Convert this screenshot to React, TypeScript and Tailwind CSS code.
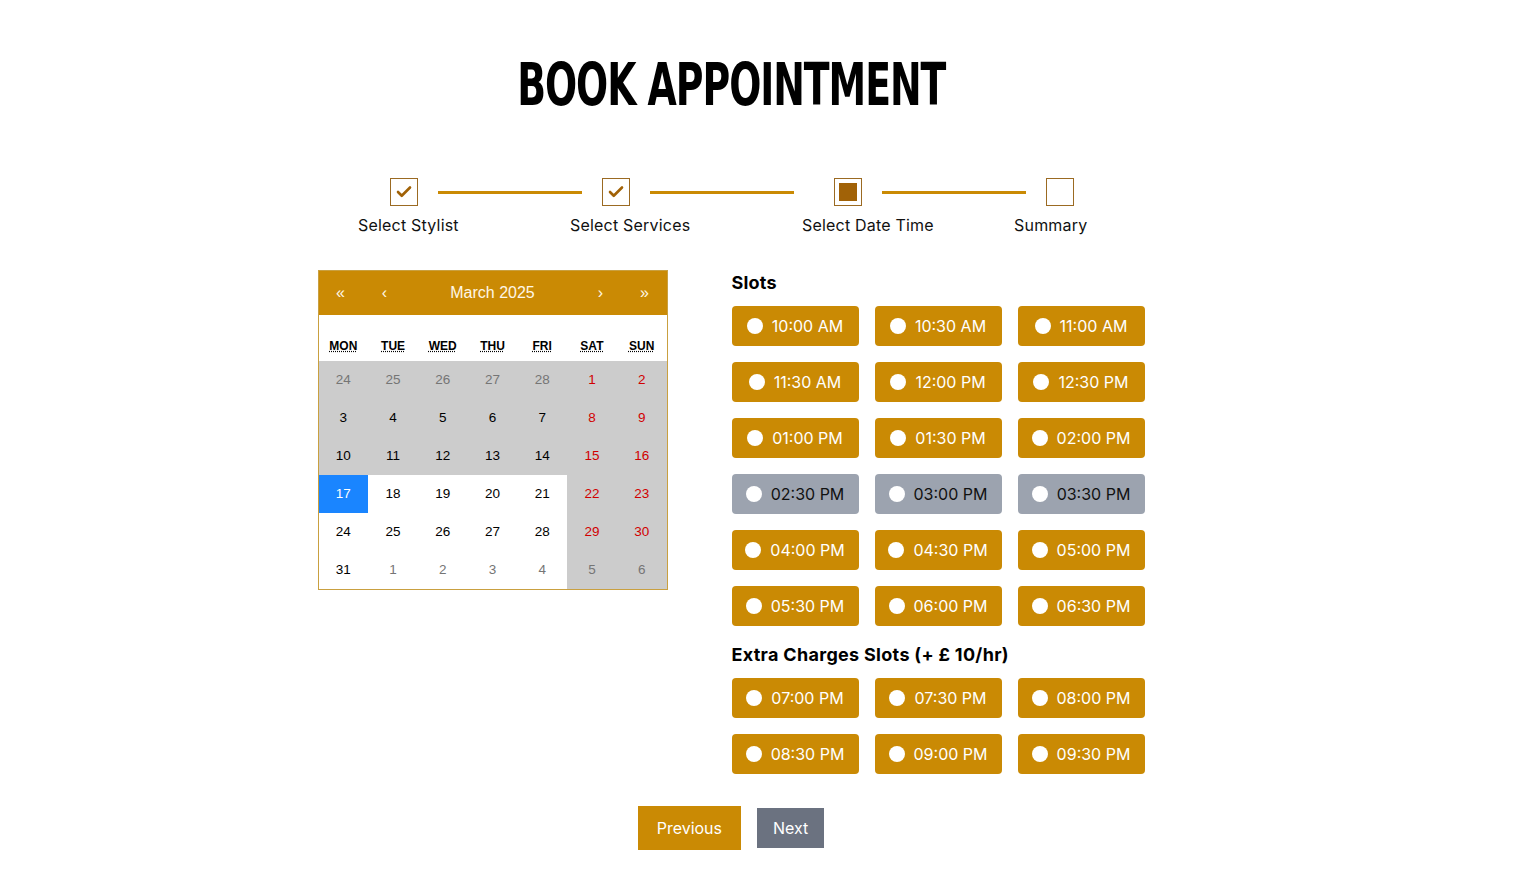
import { Check } from "lucide-react";

type Slot = { time: string; booked?: boolean };

const slots: Slot[] = [
  { time: "10:00 AM" },
  { time: "10:30 AM" },
  { time: "11:00 AM" },
  { time: "11:30 AM" },
  { time: "12:00 PM" },
  { time: "12:30 PM" },
  { time: "01:00 PM" },
  { time: "01:30 PM" },
  { time: "02:00 PM" },
  { time: "02:30 PM", booked: true },
  { time: "03:00 PM", booked: true },
  { time: "03:30 PM", booked: true },
  { time: "04:00 PM" },
  { time: "04:30 PM" },
  { time: "05:00 PM" },
  { time: "05:30 PM" },
  { time: "06:00 PM" },
  { time: "06:30 PM" },
];

const extraSlots: Slot[] = [
  { time: "07:00 PM" },
  { time: "07:30 PM" },
  { time: "08:00 PM" },
  { time: "08:30 PM" },
  { time: "09:00 PM" },
  { time: "09:30 PM" },
];

const weekdays = ["MON", "TUE", "WED", "THU", "FRI", "SAT", "SUN"];

type Day = { n: number; muted?: boolean; past?: boolean; active?: boolean };

const days: Day[] = [
  ...[24, 25, 26, 27, 28].map((n) => ({ n, muted: true, past: true })),
  ...Array.from({ length: 31 }, (_, i) => ({
    n: i + 1,
    past: i + 1 < 17,
    active: i + 1 === 17,
  })),
  ...[1, 2, 3, 4, 5, 6].map((n) => ({ n, muted: true })),
];

function SlotButton({ slot }: { slot: Slot }) {
  return (
    <button
      className={
        slot.booked
          ? "flex h-10 items-center justify-center gap-[9px] rounded bg-[#9ca3af] text-[16px] text-[#111]"
          : "flex h-10 items-center justify-center gap-[9px] rounded bg-[#ca8a04] text-[16px] text-white"
      }
    >
      <span className="h-4 w-4 rounded-full bg-white" />
      {slot.time}
    </button>
  );
}

function StepBox({ state }: { state: "done" | "current" | "todo" }) {
  return (
    <div className="flex h-[28px] w-[28px] items-center justify-center border-[1.5px] border-[#9b6a22] bg-white">
      {state === "done" && <Check className="h-[18px] w-[18px] text-[#a16207]" strokeWidth={3.5} />}
      {state === "current" && <div className="h-[18px] w-[18px] bg-[#a16207]" />}
    </div>
  );
}

export default function App() {
  return (
    <div className="w-[1462px] bg-white pb-10 font-['Inter',sans-serif] text-black">
      <div className="flex justify-center pt-[56px]">
        <h1 className="inline-block scale-x-[0.725] font-['DejaVu_Sans_Condensed','DejaVu_Sans',sans-serif] text-[58px] font-bold leading-none tracking-tight">
          BOOK APPOINTMENT
        </h1>
      </div>

      {/* stepper */}
      <div className="mx-auto mt-[64px] w-[746px]">
        <div className="flex items-center">
          <div className="ml-8">
            <StepBox state="done" />
          </div>
          <div className="mx-5 h-[3px] w-[144px] bg-[#ca8a04]" />
          <StepBox state="done" />
          <div className="ml-5 mr-10 h-[3px] w-[144px] bg-[#ca8a04]" />
          <StepBox state="current" />
          <div className="mx-5 h-[3px] w-[144px] bg-[#ca8a04]" />
          <StepBox state="todo" />
        </div>
        <div className="mt-[7px] flex text-[16px] leading-6 tracking-[0.2px] text-[#111]">
          <div className="w-[212px]">Select Stylist</div>
          <div className="w-[232px]">Select Services</div>
          <div className="w-[212px]">Select Date Time</div>
          <div>Summary</div>
        </div>
      </div>

      <div className="mt-[33px] flex justify-center gap-16">
        {/* calendar */}
        <div className="h-fit w-[350px] border border-[#c9a040] bg-white font-['Liberation_Sans',Arial,sans-serif]">
          <div className="flex h-[44px] items-center bg-[#ca8a04] text-[16px] text-[#fff7e6]">
            <button className="w-11 text-center">«</button>
            <button className="w-11 text-center">‹</button>
            <div className="flex-1 text-center">March 2025</div>
            <button className="w-11 text-center">›</button>
            <button className="w-11 text-center">»</button>
          </div>
          <div className="grid h-[46px] grid-cols-7 items-end pb-[6px] text-[12px] font-bold">
            {weekdays.map((d) => (
              <div key={d} className="text-center">
                <abbr className="underline decoration-dotted">{d}</abbr>
              </div>
            ))}
          </div>
          <div className="grid grid-cols-7">
            {days.map((d, i) => {
              const weekend = i % 7 >= 5;
              const bg = d.active ? "bg-[#1a85ff] text-white" : weekend || d.past ? "bg-[#cccccc]" : "bg-white";
              const color = d.active
                ? ""
                : d.muted
                  ? "text-[#757575]"
                  : weekend
                    ? "text-[#d10000]"
                    : "text-black";
              return (
                <div key={i} className={`flex h-[38px] items-center justify-center text-[13.5px] ${bg} ${color}`}>
                  {d.n}
                </div>
              );
            })}
          </div>
        </div>

        {/* slots */}
        <div className="w-[413px]">
          <h3 className="mb-[10px] text-[18px] font-bold leading-[26px] tracking-[0.2px]">Slots</h3>
          <div className="grid grid-cols-3 gap-4">
            {slots.map((s) => (
              <SlotButton key={s.time} slot={s} />
            ))}
          </div>
          <h3 className="mb-[10px] mt-4 text-[18px] font-bold leading-[26px] tracking-[0.3px]">
            Extra Charges Slots (+ £ 10/hr)
          </h3>
          <div className="grid grid-cols-3 gap-4">
            {extraSlots.map((s) => (
              <SlotButton key={s.time} slot={s} />
            ))}
          </div>
        </div>
      </div>

      <div className="mt-8 flex items-center justify-center gap-4 text-[16px] text-white">
        <button className="h-11 bg-[#ca8a04] px-[19px]">Previous</button>
        <button className="h-10 bg-[#6b7280] px-4">Next</button>
      </div>
    </div>
  );
}
